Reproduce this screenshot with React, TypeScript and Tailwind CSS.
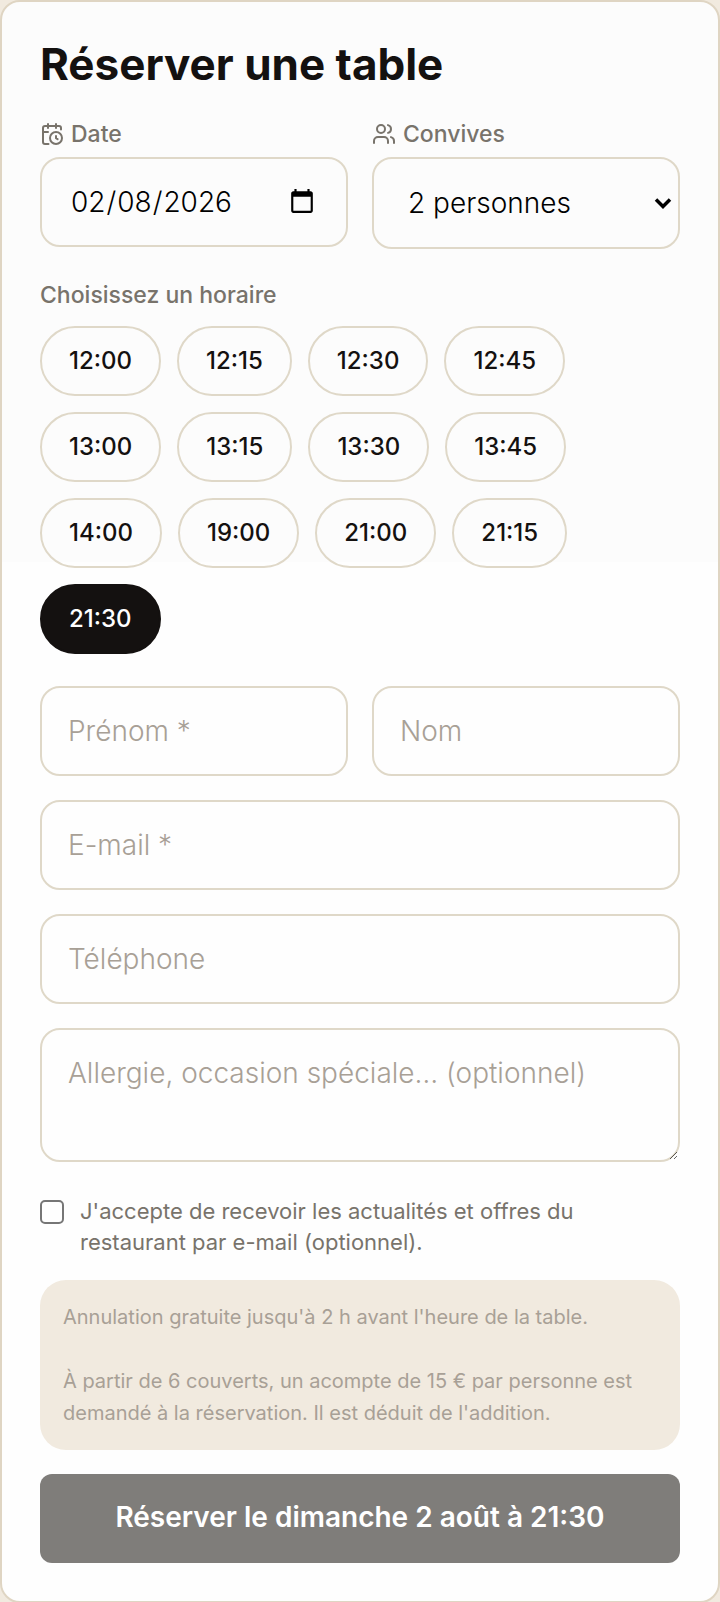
import { useState } from 'react';
import { CalendarClock, Check, ChevronDown, Users } from 'lucide-react';

const slots = [
  '12:00', '12:15', '12:30', '12:45',
  '13:00', '13:15', '13:30', '13:45',
  '14:00', '19:00', '21:00', '21:15',
  '21:30'
];

const guests = [1, 2, 3, 4, 5, 6, 7, 8];

const field =
  'block w-full rounded-[20px] border-2 border-[#dfd8c8] bg-transparent text-[28px] leading-[42px] font-light text-black outline-none placeholder:text-[#a8a096] focus:border-[#9c9384]';

const label = 'flex items-center gap-[7px] text-[23px] leading-8 font-medium text-[#78736b]';

const App = () => {
  const [slot, setSlot] = useState('21:30');

  return (
    <main className="bg-[#f1eadf] font-['Inter',sans-serif] text-[#141110]">
      <form
        onSubmit={e => e.preventDefault()}
        className="rounded-[20px] border-2 border-[#dfd5c3] bg-[linear-gradient(#fcfcfc_35%,#fefefe_35%)] px-[38px] pt-9 pb-[38px]"
      >
        <h1 className="text-[44px] leading-[52px] font-bold">Réserver une table</h1>

        {/* Date + guests */}
        <div className="mt-7 grid grid-cols-2 items-start gap-6">
          <div>
            <label htmlFor="date" className={label}>
              <CalendarClock className="size-6" strokeWidth={2} />
              Date
            </label>
            <input id="date" type="date" defaultValue="2026-02-08" className={`${field} mt-[7px] h-[90px] pr-7 pl-7`} />
          </div>
          <div>
            <label htmlFor="guests" className={label}>
              <Users className="size-6" strokeWidth={2} />
              Convives
            </label>
            <div className="relative mt-[7px]">
              <select id="guests" defaultValue={2} className={`${field} h-[92px] appearance-none px-[34px]`}>
                {guests.map(n => (
                  <option key={n} value={n}>
                    {n} {n > 1 ? 'personnes' : 'personne'}
                  </option>
                ))}
              </select>
              <ChevronDown
                className="pointer-events-none absolute inset-y-0 right-[3px] my-auto size-7 text-black"
                strokeWidth={3}
                strokeLinecap="butt"
                strokeLinejoin="miter"
              />
            </div>
          </div>
        </div>

        {/* Time slots */}
        <fieldset className="mt-[30px]">
          <legend className="text-[23px] leading-8 font-medium text-[#78736b]">Choisissez un horaire</legend>
          <div className="mt-[15px] flex max-w-[560px] flex-wrap gap-4">
            {slots.map(time => (
              <button
                key={time}
                type="button"
                aria-pressed={slot === time}
                onClick={() => setSlot(time)}
                className={`h-[70px] rounded-full border-2 px-[27px] text-[24px] font-medium ${
                  slot === time ? 'border-[#141110] bg-[#141110] text-white' : 'border-[#dfd8c8]'
                }`}
              >
                {time}
              </button>
            ))}
          </div>
        </fieldset>

        {/* Contact details */}
        <div className="mt-8 grid grid-cols-2 gap-6">
          <input aria-label="Prénom" placeholder="Prénom *" className={`${field} h-[90px] px-[26px]`} />
          <input aria-label="Nom" placeholder="Nom" className={`${field} h-[90px] px-[26px]`} />
          <input aria-label="E-mail" type="email" placeholder="E-mail *" className={`${field} col-span-2 h-[90px] px-[26px]`} />
          <input aria-label="Téléphone" type="tel" placeholder="Téléphone" className={`${field} col-span-2 h-[90px] px-[26px]`} />
          <textarea
            aria-label="Message"
            placeholder="Allergie, occasion spéciale… (optionnel)"
            className={`${field} col-span-2 h-[134px] px-[26px] py-[22px]`}
          />
        </div>

        <label className="mt-[34px] flex items-start gap-4 text-[22px] leading-[31px] text-[#78736b]">
          <span className="relative mt-1 size-6 shrink-0">
            <input
              type="checkbox"
              className="peer block size-full appearance-none rounded-[5px] border-2 border-[#767676] checked:bg-[#141110]"
            />
            <Check className="pointer-events-none absolute inset-0 hidden size-6 text-white peer-checked:block" strokeWidth={3} />
          </span>
          <span>J'accepte de recevoir les actualités et offres du restaurant par e-mail (optionnel).</span>
        </label>

        <div className="mt-[22px] rounded-[26px] bg-[#f1eadf] px-[23px] py-[21px] text-[20px] leading-8 text-[#a8a096]">
          <p>Annulation gratuite jusqu'à 2 h avant l'heure de la table.</p>
          <p className="mt-8">
            À partir de 6 couverts, un acompte de 15 € par personne est demandé à la réservation. Il est déduit de l'addition.
          </p>
        </div>

        <button type="submit" className="mt-6 h-[89px] w-full rounded-xl bg-[#7f7d7a] pb-1 text-[28px] font-semibold text-white">
          Réserver le dimanche 2 août à {slot}
        </button>
      </form>
    </main>
  );
};

export default App;
